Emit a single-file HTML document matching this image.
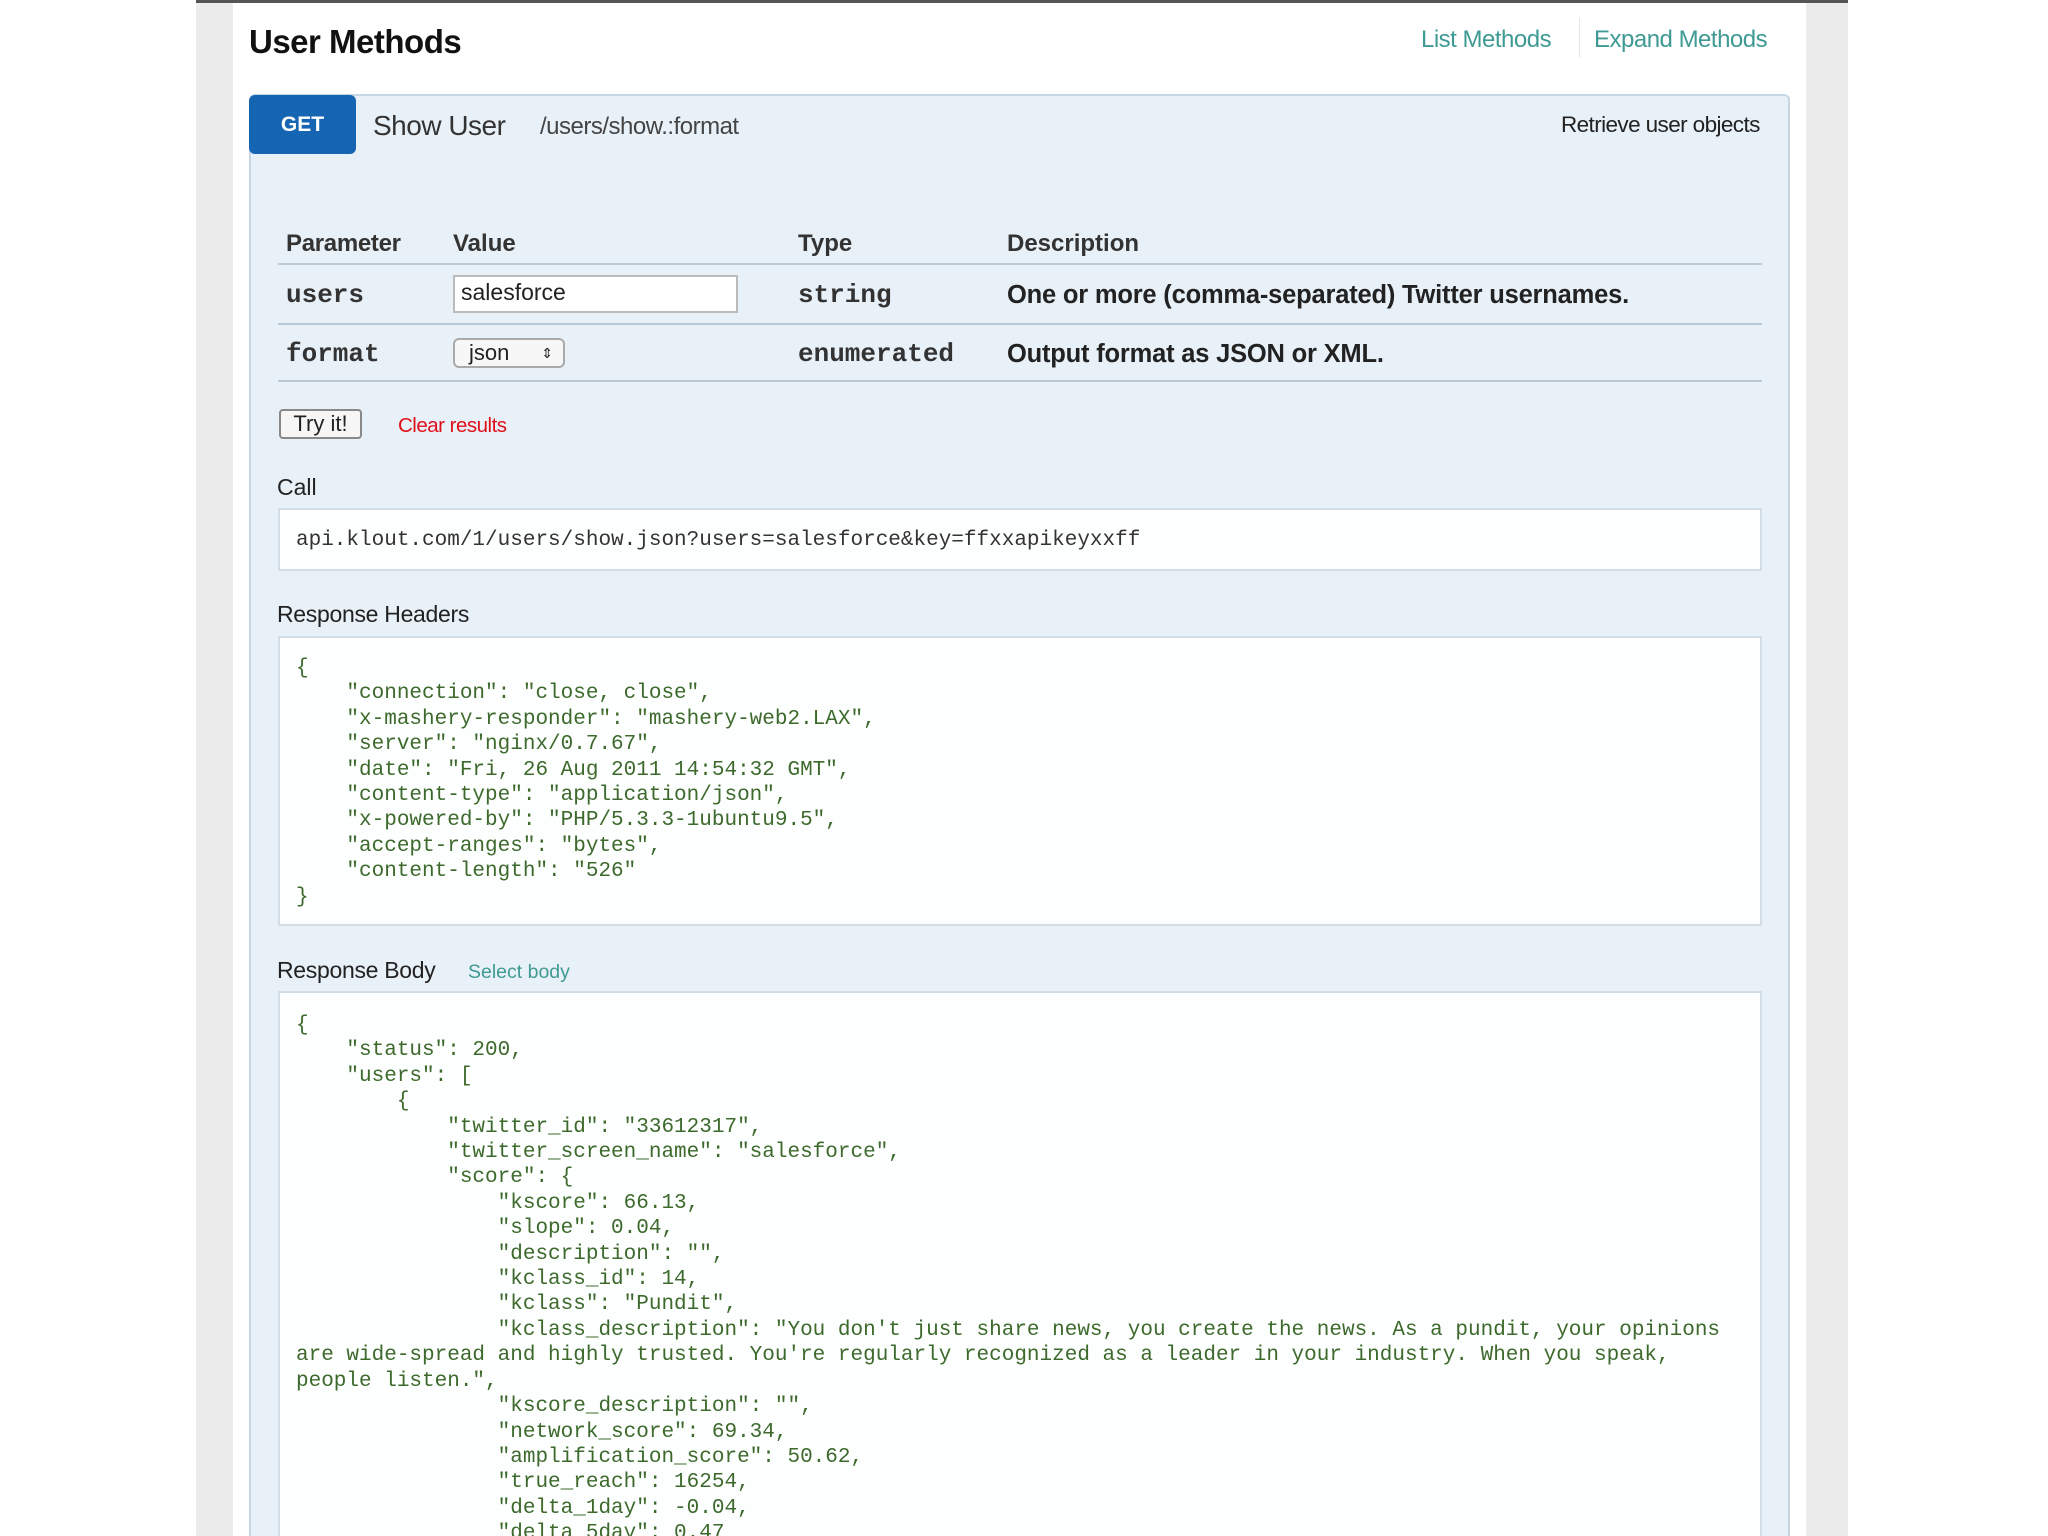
<!DOCTYPE html>
<html><head><meta charset="utf-8"><style>
*{margin:0;padding:0;box-sizing:border-box}
html,body{width:2048px;height:1536px;overflow:hidden}
body{background:#fff;font-family:"Liberation Sans",sans-serif;color:#222}
#w{position:relative;width:2048px;height:1536px;overflow:hidden}
.a{position:absolute;white-space:nowrap}
.mono{font-family:"Liberation Mono",monospace}
pre{font-family:"Liberation Mono",monospace;font-size:21px;line-height:25.4px;color:#3d6a2c;position:absolute;left:296px;margin:0}
.box{position:absolute;left:278px;width:1484px;background:#fdfefe;border:2px solid #d3dde6}
.hl{position:absolute;left:278px;width:1484px;height:2px;background:#b9c9d6}
</style></head><body><div id="w">
<div class="a" style="left:196px;top:0;width:1652px;height:3px;background:#555"></div>
<div class="a" style="left:196px;top:3px;width:37px;height:1533px;background:#ececec"></div>
<div class="a" style="left:1806px;top:3px;width:42px;height:1533px;background:#ececec"></div>
<div class="a" style="left:249px;top:23px;font-size:33px;font-weight:bold;color:#111;letter-spacing:-0.5px">User Methods</div>
<div class="a" style="left:1421px;top:26px;font-size:24px;color:#3e9a93;letter-spacing:-0.5px">List Methods</div>
<div class="a" style="left:1579px;top:18px;width:1px;height:40px;background:#e6e6e6"></div>
<div class="a" style="left:1594px;top:26px;font-size:24px;color:#3e9a93;letter-spacing:-0.5px">Expand Methods</div>
<div class="a" style="left:249px;top:94px;width:1541px;height:1500px;background:#e9f1f8;border:2px solid #c6d6e4;border-radius:6px"></div>
<div class="a" style="left:249px;top:95px;width:107px;height:59px;background:#1565b3;border-radius:6px;color:#fff;font-weight:bold;font-size:21px;text-align:center;line-height:59px">GET</div>
<div class="a" style="left:373px;top:110px;font-size:28px;color:#333;letter-spacing:-0.5px">Show User</div>
<div class="a" style="left:540px;top:113px;font-size:24px;color:#444;letter-spacing:-0.5px">/users/show.:format</div>
<div class="a" style="left:1561px;top:112px;font-size:22.5px;color:#222;letter-spacing:-0.6px">Retrieve user objects</div>
<div class="a" style="left:286px;top:230px;font-size:24px;font-weight:bold;color:#333;letter-spacing:-0.3px">Parameter</div>
<div class="a" style="left:453px;top:230px;font-size:24px;font-weight:bold;color:#333">Value</div>
<div class="a" style="left:798px;top:230px;font-size:24px;font-weight:bold;color:#333">Type</div>
<div class="a" style="left:1007px;top:230px;font-size:24px;font-weight:bold;color:#333">Description</div>
<div class="hl" style="top:263px"></div>
<div class="a mono" style="left:286px;top:280px;font-size:26px;font-weight:bold;color:#333">users</div>
<div class="a" style="left:453px;top:275px;width:285px;height:38px;background:#fff;border:2px solid #bbb"></div>
<div class="a" style="left:461px;top:279px;font-size:23px;color:#222">salesforce</div>
<div class="a mono" style="left:798px;top:280px;font-size:26px;font-weight:bold;color:#333">string</div>
<div class="a" style="left:1007px;top:281px;font-size:25.5px;font-weight:bold;color:#222;letter-spacing:-0.2px">One or more (comma-separated) Twitter usernames.</div>
<div class="hl" style="top:323px"></div>
<div class="a mono" style="left:286px;top:339px;font-size:26px;font-weight:bold;color:#333">format</div>
<div class="a" style="left:453px;top:338px;width:112px;height:30px;background:#f7f7f7;border:2px solid #aaa;border-radius:6px;font-size:22px;line-height:26px;padding-left:14px">json <span style="position:absolute;right:10px;top:0;font-size:14px">&#8661;</span></div>
<div class="a mono" style="left:798px;top:339px;font-size:26px;font-weight:bold;color:#333">enumerated</div>
<div class="a" style="left:1007px;top:340px;font-size:25.5px;font-weight:bold;color:#222;letter-spacing:-0.2px">Output format as JSON or XML.</div>
<div class="hl" style="top:380px"></div>
<div class="a" style="left:279px;top:409px;width:83px;height:30px;background:#f6f6f6;border:2px solid #888;border-radius:4px;font-size:22px;text-align:center;line-height:26px">Try it!</div>
<div class="a" style="left:398px;top:414px;font-size:20.5px;color:#e0101a;letter-spacing:-0.5px">Clear results</div>
<div class="a" style="left:277px;top:474px;font-size:23px;color:#222">Call</div>
<div class="box" style="top:508px;height:63px"></div>
<pre style="top:528px;color:#333">api.klout.com/1/users/show.json?users=salesforce&amp;key=ffxxapikeyxxff</pre>
<div class="a" style="left:277px;top:601px;font-size:23px;color:#222;letter-spacing:-0.3px">Response Headers</div>
<div class="box" style="top:636px;height:290px"></div>
<pre style="top:656px">{
    "connection": "close, close",
    "x-mashery-responder": "mashery-web2.LAX",
    "server": "nginx/0.7.67",
    "date": "Fri, 26 Aug 2011 14:54:32 GMT",
    "content-type": "application/json",
    "x-powered-by": "PHP/5.3.3-1ubuntu9.5",
    "accept-ranges": "bytes",
    "content-length": "526"
}</pre>
<div class="a" style="left:277px;top:957px;font-size:23px;color:#222;letter-spacing:-0.3px">Response Body</div>
<div class="a" style="left:468px;top:961px;font-size:19.5px;color:#3e9a93">Select body</div>
<div class="box" style="top:991px;height:600px"></div>
<pre style="top:1013px">{
    "status": 200,
    "users": [
        {
            "twitter_id": "33612317",
            "twitter_screen_name": "salesforce",
            "score": {
                "kscore": 66.13,
                "slope": 0.04,
                "description": "",
                "kclass_id": 14,
                "kclass": "Pundit",
                "kclass_description": "You don't just share news, you create the news. As a pundit, your opinions
are wide-spread and highly trusted. You're regularly recognized as a leader in your industry. When you speak,
people listen.",
                "kscore_description": "",
                "network_score": 69.34,
                "amplification_score": 50.62,
                "true_reach": 16254,
                "delta_1day": -0.04,
                "delta_5day": 0.47</pre>
</div></body></html>
